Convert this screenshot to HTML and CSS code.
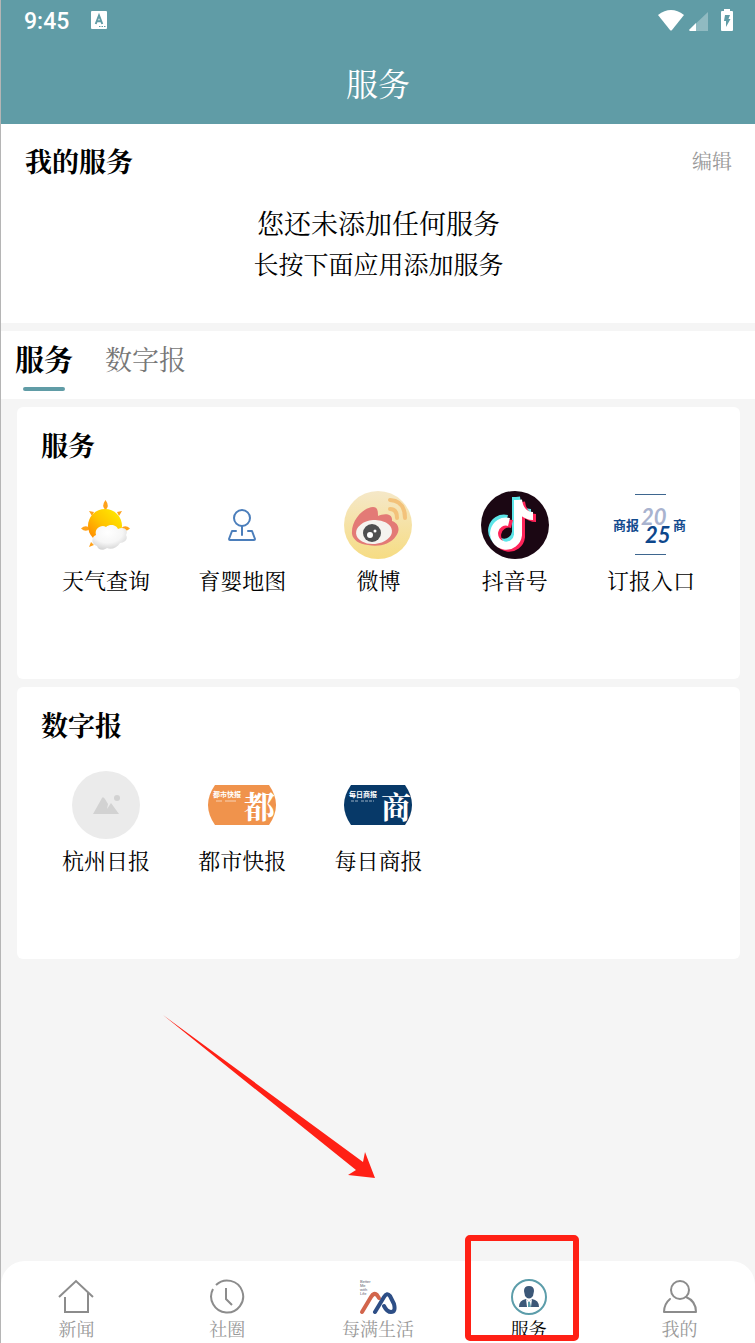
FILE: index.html
```html
<!DOCTYPE html>
<html lang="zh-CN">
<head>
  <meta charset="UTF-8">
  <meta name="viewport" content="width=device-width, initial-scale=1.0">
  <title>服务</title>
  <link rel="stylesheet" href="styles.css">
</head>
<body>
  <header class="header">
    <div class="status-bar">
      <span class="time">9:45</span>
      <svg class="input-icon" width="16" height="18" viewBox="0 0 16 18">
        <rect width="16" height="18" rx="1" fill="#fff"/>
        <path d="M4.7 13 L8 4.5 L11.3 13 M6 10.2 H10" fill="none" stroke="#609ca6" stroke-width="2"/>
        <path d="M8 15.5 H15" stroke="#609ca6" stroke-dasharray="1.5 1"/>
      </svg>
      <div class="status-icons">
        <svg width="26" height="21" viewBox="0 0 26 21"><path d="M0 5 Q13 -5 26 5 L14 20 Q13 21 12 20 Z" fill="#fff"/></svg>
        <svg width="19" height="19" viewBox="0 0 19 19">
          <path d="M0 18 L19 0 V19 H1 Z" fill="#fff" opacity=".3"/>
          <path d="M0 18 L7 11 V19 H1 Z" fill="#fff"/>
        </svg>
        <svg class="battery" width="12" height="22" viewBox="0 0 12 22">
          <path d="M3 0 H9 V2 H11 Q12 2 12 3 V21 Q12 22 11 22 H1 Q0 22 0 21 V3 Q0 2 1 2 H3 Z" fill="#fff"/>
          <path d="M4 6 H9 L7.5 10 H9.5 L5 18 V12 H3 Z" fill="#609ca6"/>
        </svg>
      </div>
    </div>
    <h1>服务</h1>
  </header>

  <section class="mine">
    <div class="mine-head">
      <h2>我的服务</h2>
      <button class="edit" type="button">编辑</button>
    </div>
    <p class="empty">您还未添加任何服务</p>
    <p class="hint">长按下面应用添加服务</p>
  </section>

  <div class="tabs">
    <button class="tab active" type="button">服务</button>
    <button class="tab" type="button">数字报</button>
  </div>

  <main class="content">
    <section class="card">
      <h2>服务</h2>
      <div class="grid">
        <a class="app" href="#">
          <svg width="68" height="68" viewBox="0 0 68 68">
            <defs>
              <linearGradient id="sun" x1="1" y1="0" x2="0" y2="1">
                <stop offset="0" stop-color="#fff000"/>
                <stop offset=".5" stop-color="#ffc400"/>
                <stop offset="1" stop-color="#ff7a00"/>
              </linearGradient>
              <radialGradient id="cloud" cx=".45" cy=".3" r=".7">
                <stop offset="0" stop-color="#fff"/>
                <stop offset=".6" stop-color="#f6f6f6"/>
                <stop offset="1" stop-color="#d5d5d5"/>
              </radialGradient>
            </defs>
            <g fill="#ffa21a">
              <path d="M33.500 9 Q38 15 33.500 19 Q29 15 33.500 9 Z"/>
              <path d="M9 37.500 Q14 33 18 37.500 Q14 42 9 37.500 Z"/>
              <path d="M58 37.500 Q53 33 49 37.500 Q53 42 58 37.500 Z"/>
              <path d="M17 20 L22 21 L20 25 Z M50 20 L45 21 L47 25 Z M17 56 L22 54 L19 51 Z"/>
            </g>
            <circle cx="33" cy="35" r="17" fill="url(#sun)"/>
            <path d="M25 55 C18 53 20 45 24 44 C22 37 30 33 34 36 C39 32 45 35 46 38 C52 35 57 39 54 44 C57 49 51 52 48 52 C45 57 39 59 35 57 C31 60 26 59 25 55 Z" fill="url(#cloud)"/>
          </svg>
          <span>天气查询</span>
        </a>
        <a class="app" href="#">
          <svg width="68" height="68" viewBox="0 0 68 68" fill="none" stroke="#4b7ebb" stroke-width="2" stroke-linecap="round" stroke-linejoin="round">
            <circle cx="34" cy="27" r="8"/>
            <path d="M34 35 V44 M28 40 H24 L21 48 Q21 49 22 49 H46 Q47 49 47 48 L44 40 H40"/>
          </svg>
          <span>育婴地图</span>
        </a>
        <a class="app" href="#">
          <svg width="68" height="68" viewBox="0 0 68 68">
            <defs>
              <linearGradient id="weibo" x1="0" y1="0" x2="0" y2="1">
                <stop offset="0" stop-color="#f5e8c8"/>
                <stop offset="1" stop-color="#f6dc83"/>
              </linearGradient>
            </defs>
            <circle cx="34" cy="34" r="34" fill="url(#weibo)"/>
            <path d="M8 43 C7 30 18 17 29 16 C34 16 34 21 34 25 C40 22 49 22 48 30 C54 32 57 38 52 45 C46 54 34 56 24 54 C15 53 9 49 8 43 Z" fill="#e37a76"/>
            <ellipse cx="30" cy="41" rx="18" ry="12" fill="#f5f3ef" transform="rotate(-5 30 41)"/>
            <circle cx="28" cy="42" r="9" fill="#4e4f50"/>
            <circle cx="26" cy="44" r="3" fill="#fff"/>
            <circle cx="31" cy="40" r="1.500" fill="#fff"/>
            <path d="M46 18 Q53 18 53 27 M46 9 Q61 10 61 27" fill="none" stroke="#f3c27a" stroke-width="4" stroke-linecap="round"/>
          </svg>
          <span>微博</span>
        </a>
        <a class="app" href="#">
          <svg width="68" height="68" viewBox="0 0 68 68">
            <defs>
              <path id="note" d="M36 6 V41 A12 12 0 1 1 27 28 M36 6 C37 16 43 22 51 22"/>
            </defs>
            <circle cx="34" cy="34" r="34" fill="#1b0713"/>
            <g fill="none" stroke-width="8">
              <use href="#note" x="-1" y="0" stroke="#5de5e8"/>
              <use href="#note" x="4" y="5" stroke="#ff2459"/>
              <use href="#note" x="1" y="3" stroke="#fff"/>
            </g>
          </svg>
          <span>抖音号</span>
        </a>
        <a class="app" href="#">
          <svg width="70" height="68" viewBox="0 0 70 68">
            <path d="M19 3.500 H50 M19 63.500 H50" stroke="#3e668f"/>
            <g class="logo-text" fill="#124b8e" font-size="13">
              <text x="-3" y="39">商报</text>
              <text x="57" y="39">商</text>
            </g>
            <g class="script-text" font-size="22">
              <text x="25" y="34" fill="#a9b3cf">20</text>
              <text x="29" y="52" fill="#0d478c">25</text>
            </g>
          </svg>
          <span>订报入口</span>
        </a>
      </div>
    </section>

    <section class="card">
      <h2>数字报</h2>
      <div class="grid">
        <a class="app" href="#">
          <svg width="68" height="68" viewBox="0 0 68 68">
            <circle cx="34" cy="34" r="34" fill="#ebebeb"/>
            <path d="M21 43 L30 27 Q31 25 33 28 L36 33 L35 38 L39 32 L47 43 Z" fill="#d2d2d2"/>
            <circle cx="45" cy="27" r="3" fill="#d2d2d2"/>
          </svg>
          <span>杭州日报</span>
        </a>
        <a class="app" href="#">
          <svg width="68" height="68" viewBox="0 0 68 68">
            <path d="M7 14 H61 Q75 34 61 54 H7 Q-7 34 7 14 Z" fill="#f0934c"/>
            <g fill="#fff">
              <text class="logo-text" x="5" y="26" font-size="7">都市快报</text>
              <path d="M8 30 H14 M17 30 H28" stroke="#fff" opacity=".6"/>
              <text class="brush" x="36" y="47" font-size="31">都</text>
            </g>
          </svg>
          <span>都市快报</span>
        </a>
        <a class="app" href="#">
          <svg width="68" height="68" viewBox="0 0 68 68">
            <path d="M7 14 H61 Q75 34 61 54 H7 Q-7 34 7 14 Z" fill="#073968"/>
            <g fill="#fff">
              <text class="logo-text" x="5" y="26" font-size="7">每日商报</text>
              <path d="M7 30 H14 M17 30 H30" stroke="#fff" stroke-dasharray="3 1" opacity=".6"/>
              <text class="brush" x="37" y="47" font-size="30">商</text>
            </g>
          </svg>
          <span>每日商报</span>
        </a>
      </div>
    </section>

    <svg class="arrow" width="212" height="164" viewBox="0 0 212 164">
      <path d="M0 0 L200 147 L202 137 L212 163 L185 160 L193 155 Z" fill="#ff2015"/>
    </svg>
  </main>

  <nav class="nav">
    <a href="#">
      <svg width="36" height="36" viewBox="0 0 36 36" fill="none" stroke="#8c8c8c" stroke-width="2">
        <path d="M1 18 L18 2 L35 18 M7 18 V33 H30 V14"/>
      </svg>
      <span>新闻</span>
    </a>
    <a href="#">
      <svg width="36" height="36" viewBox="0 0 36 36" fill="none" stroke="#8c8c8c" stroke-width="2">
        <path d="M7 6 A16 16 0 1 1 4 10 M17 9 V20 L23 26"/>
      </svg>
      <span>社圈</span>
    </a>
    <a href="#">
      <svg width="38" height="36" viewBox="0 0 38 36" fill="none" stroke-width="4" stroke-linecap="round" stroke-linejoin="round">
        <path d="M3 33 L12 18 Q15 13 18 16 L20 19" stroke="#d2654c"/>
        <path d="M16 33 L25 18 Q28 13 31 17 L35 25 Q37 33 32 33 Q28 33 25 27" stroke="#2d4e86"/>
        <g class="tiny" fill="#555b70" stroke="none" font-size="4">
          <text x="1" y="4">Better</text>
          <text x="1" y="8">Me</text>
          <text x="1" y="12">with</text>
          <text x="1" y="16">Life</text>
        </g>
      </svg>
      <span>每满生活</span>
    </a>
    <a class="current" href="#">
      <svg width="36" height="36" viewBox="0 0 36 36">
        <circle cx="18" cy="18" r="17" fill="#fff" stroke="#5c9daa" stroke-width="2"/>
        <path d="M13 12 Q13 7 18 7 Q23 7 23 12 L22 17 Q18 22 14 17 Z" fill="#3c5878"/>
        <path d="M8 28 Q8 21 15 20 L18 23 L21 20 Q28 21 28 28 Z" fill="#3c5878"/>
        <path d="M15 20 L18 23 L21 20 L20 28 H16 Z" fill="#fff"/>
        <path d="M17 23 H19 L20 28 H17 Z" fill="#5c9daa"/>
      </svg>
      <span>服务</span>
    </a>
    <a href="#">
      <svg width="36" height="36" viewBox="0 0 36 36" fill="none" stroke="#8c8c8c" stroke-width="2" stroke-linecap="round" stroke-linejoin="round">
        <circle cx="18" cy="11" r="9"/>
        <path d="M8 20 Q2 25 2 33 H34 Q34 22 24 18"/>
      </svg>
      <span>我的</span>
    </a>
  </nav>
</body>
</html>
```
FILE: styles.css
```css
* {
  box-sizing: border-box;
}
body {
  display: flex;
  flex-direction: column;
  min-height: 100vh;
  margin: 0;
  border-left: 1px solid #b5b5b5;
  background: #f5f5f5;
  color: #000;
  font-family: "Noto Serif CJK SC", "Noto Sans CJK SC", serif;
}
h1, h2, p {
  margin: 0;
}
h2 {
  font-size: 27px;
  line-height: 40px;
  font-weight: 700;
}
a {
  color: inherit;
  text-decoration: none;
}
button {
  padding: 0;
  border: none;
  background: none;
  font-family: inherit;
  cursor: pointer;
}
svg {
  display: block;
}

.header {
  background: #609ca6;
  color: #fff;
}
.status-bar {
  display: flex;
  align-items: center;
  height: 40px;
  padding: 0 22px 0 23px;
}
.time {
  font: 500 23px/36px Roboto, sans-serif;
  padding-top: 4px;
}
.input-icon {
  margin-left: 22px;
}
.status-icons {
  display: flex;
  align-items: flex-end;
  gap: 5px;
  margin-left: auto;
}
.battery {
  margin-left: 8px;
}
.header h1 {
  height: 84px;
  font-size: 32px;
  line-height: 84px;
  font-weight: 400;
  text-align: center;
}

.mine {
  padding: 17px 23px 41px 24px;
  background: #fff;
  text-align: center;
}
.mine-head {
  display: flex;
  align-items: flex-start;
  justify-content: space-between;
  margin-bottom: 21px;
}
.edit {
  color: #999;
  font-size: 20px;
  line-height: 40px;
}
.empty {
  font-size: 27px;
  line-height: 42px;
}
.hint {
  font-size: 25px;
  line-height: 38px;
}

.tabs {
  display: flex;
  gap: 32px;
  height: 68px;
  margin: 8px 0;
  padding: 0 14px;
  background: #fff;
}
.tab {
  display: flex;
  flex-direction: column;
  align-items: center;
  color: #777;
  font-size: 27px;
  line-height: 56px;
}
.tab.active {
  color: #000;
  font-size: 29px;
  font-weight: 700;
}
.tab.active::after {
  content: "";
  width: 42px;
  height: 4px;
  border-radius: 2px;
  background: #609ca6;
}

.content {
  position: relative;
  flex: 1;
  padding: 0 15px 0 16px;
}
.card {
  min-height: 272px;
  margin-bottom: 8px;
  padding: 18px 21px;
  border-radius: 6px;
  background: #fff;
}
.card h2 {
  padding-left: 3px;
}
.grid {
  display: grid;
  grid-template-columns: repeat(5, 1fr);
  margin-top: 26px;
}
.app {
  display: flex;
  flex-direction: column;
  align-items: center;
  gap: 5px;
  font-size: 22px;
  line-height: 32px;
}
.app svg {
  overflow: visible;
}
.logo-text {
  font-family: "Noto Sans CJK SC", sans-serif;
  font-weight: 700;
}
.script-text {
  font-family: Lato, sans-serif;
  font-style: italic;
  font-weight: 700;
}
.brush {
  font-weight: 700;
}
.tiny {
  font-family: "Liberation Sans", sans-serif;
}

/* pointer to the current tab */
.arrow {
  position: absolute;
  left: 162px;
  bottom: 82px;
}

.nav {
  display: grid;
  grid-template-columns: repeat(5, 1fr);
  height: 82px;
  border-radius: 24px 24px 0 0;
  background: #fff;
}
.nav a {
  position: relative;
  display: flex;
  flex-direction: column;
  align-items: center;
  padding-top: 18px;
  color: #999;
  font-size: 18px;
  line-height: 26px;
}
.nav .current {
  color: #000;
}
.current::after {
  content: "";
  position: absolute;
  top: -26px;
  left: 12px;
  right: 25px;
  bottom: 2px;
  border: 6px solid #ff2015;
  border-radius: 5px;
}
```
